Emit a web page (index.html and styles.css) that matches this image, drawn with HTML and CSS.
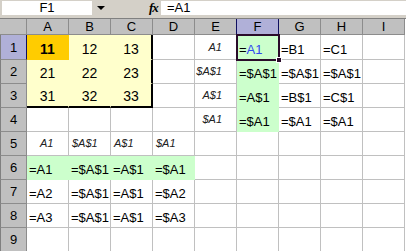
FILE: index.html
```html
<!DOCTYPE html>
<html lang="en">
<head>
    <title>Sheet1</title>
    <meta name="viewport" content="width=device-width, initial-scale=1.0" />
    <link rel="stylesheet" href="styles.css">
</head>

<body>
    <div class="formula-bar">
        <div class="name-box">F1</div>
        <div class="name-drop"></div>
        <div class="fx">fx</div>
        <div class="formula-input">=A1</div>
    </div>

    <div class="sheet">
        <!-- column headers -->
        <div class="c h corner"></div>
        <div class="c h">A</div>
        <div class="c h">B</div>
        <div class="c h">C</div>
        <div class="c h">D</div>
        <div class="c h before-on">E</div>
        <div class="c h on col-on">F</div>
        <div class="c h">G</div>
        <div class="c h">H</div>
        <div class="c h">I</div>

        <!-- row 1 -->
        <div class="c h rh on row-on">1</div>
        <div class="c num gold">11</div>
        <div class="c num yel">12</div>
        <div class="c num yel box-r">13</div>
        <div class="c"></div>
        <div class="c lbl lbl-e">A1</div>
        <div class="c grn sel">=<span class="ref">A1</span></div>
        <div class="c">=B1</div>
        <div class="c">=C1</div>
        <div class="c"></div>

        <!-- row 2 -->
        <div class="c h rh">2</div>
        <div class="c num yel">21</div>
        <div class="c num yel">22</div>
        <div class="c num yel box-r">23</div>
        <div class="c"></div>
        <div class="c lbl lbl-e">$A$1</div>
        <div class="c grn">=$A$1</div>
        <div class="c">=$A$1</div>
        <div class="c">=$A$1</div>
        <div class="c"></div>

        <!-- row 3 -->
        <div class="c h rh">3</div>
        <div class="c num yel box-b">31</div>
        <div class="c num yel box-b">32</div>
        <div class="c num yel box-r box-b">33</div>
        <div class="c"></div>
        <div class="c lbl lbl-e">A$1</div>
        <div class="c grn">=A$1</div>
        <div class="c">=B$1</div>
        <div class="c">=C$1</div>
        <div class="c"></div>

        <!-- row 4 -->
        <div class="c h rh">4</div>
        <div class="c"></div>
        <div class="c"></div>
        <div class="c"></div>
        <div class="c"></div>
        <div class="c lbl lbl-e">$A1</div>
        <div class="c grn">=$A1</div>
        <div class="c">=$A1</div>
        <div class="c">=$A1</div>
        <div class="c"></div>

        <!-- row 5 -->
        <div class="c h rh">5</div>
        <div class="c lbl lbl-a">A1</div>
        <div class="c lbl">$A$1</div>
        <div class="c lbl">A$1</div>
        <div class="c lbl">$A1</div>
        <div class="c"></div>
        <div class="c"></div>
        <div class="c"></div>
        <div class="c"></div>
        <div class="c"></div>

        <!-- row 6 -->
        <div class="c h rh">6</div>
        <div class="c grn">=A1</div>
        <div class="c grn">=$A$1</div>
        <div class="c grn">=A$1</div>
        <div class="c grn">=$A1</div>
        <div class="c"></div>
        <div class="c"></div>
        <div class="c"></div>
        <div class="c"></div>
        <div class="c"></div>

        <!-- row 7 -->
        <div class="c h rh">7</div>
        <div class="c">=A2</div>
        <div class="c">=$A$1</div>
        <div class="c">=A$1</div>
        <div class="c">=$A2</div>
        <div class="c"></div>
        <div class="c"></div>
        <div class="c"></div>
        <div class="c"></div>
        <div class="c"></div>

        <!-- row 8 -->
        <div class="c h rh">8</div>
        <div class="c">=A3</div>
        <div class="c">=$A$1</div>
        <div class="c">=A$1</div>
        <div class="c">=$A3</div>
        <div class="c"></div>
        <div class="c"></div>
        <div class="c"></div>
        <div class="c"></div>
        <div class="c"></div>

        <!-- row 9 -->
        <div class="c h rh">9</div>
        <div class="c"></div>
        <div class="c"></div>
        <div class="c"></div>
        <div class="c"></div>
        <div class="c"></div>
        <div class="c"></div>
        <div class="c"></div>
        <div class="c"></div>
        <div class="c"></div>
    </div>
</body>

</html>
```

FILE: styles.css
```css
body {
    margin: 0;
    background: white;
    color: black;
    font-family: "Liberation Sans", Arial, sans-serif;
    font-size: 13px;
    overflow: hidden;
}

/* formula bar */
.formula-bar {
    display: flex;
    align-items: flex-start;
    height: 18px;
    padding-top: 1px;
    box-sizing: border-box;
    background: #d4d0c8;
}

.name-box {
    margin-left: 2px;
    width: 90px;
    height: 14px;
    line-height: 14px;
    background: white;
    text-align: center;
}

.name-drop {
    width: 17px;
    height: 14px;
    display: flex;
    align-items: center;
    justify-content: center;
}

.name-drop::before {
    content: "";
    border-left: 4px solid transparent;
    border-right: 4px solid transparent;
    border-top: 4px solid black;
}

.fx {
    margin-left: 40px;
    width: 12px;
    height: 14px;
    line-height: 14px;
    font-family: "Liberation Serif", serif;
    font-style: italic;
    font-weight: bold;
    font-size: 13px;
    letter-spacing: -1px;
}

.formula-input {
    flex: 1;
    height: 14px;
    line-height: 14px;
    padding-left: 6px;
    background: white;
}

/* grid */
.sheet {
    display: grid;
    grid-template-columns: 27px repeat(9, 42px);
    grid-template-rows: 16px 25px repeat(8, 24px);
    border-top: 1px solid #808080;
}

.c {
    box-sizing: border-box;
    display: flex;
    align-items: flex-end;
    padding: 0 0 2px 2px;
    border-right: 1px solid #c0c0c0;
    border-bottom: 1px solid #c0c0c0;
    white-space: nowrap;
    overflow: hidden;
}

.h {
    align-items: center;
    justify-content: center;
    padding: 0;
    background: #c0c0c0;
    border-color: #8c8c8c;
}

.rh {
    border-left: 1px solid #808080;
}

.h.on {
    background: #b0b0d8;
}

.before-on {
    border-right-color: #101060;
}

.col-on {
    border-right-color: #101060;
    border-bottom-color: #101060;
}

.row-on {
    border-right-color: #101060;
}

.num {
    justify-content: center;
    padding-left: 0;
    font-size: 14px;
}

.gold {
    background: #ffcc00;
    border-color: #ffcc00;
    font-weight: bold;
}

.yel {
    background: #ffffcc;
    border-color: #ffffcc;
}

.box-r {
    border-right: 2px solid black;
}

.box-b {
    border-bottom: 2px solid black;
}

.grn {
    background: #ccffcc;
    border-color: #ccffcc;
}

.lbl {
    align-items: center;
    padding: 0 0 1px 3px;
    font-size: 11px;
    font-style: italic;
    color: #222;
}

.lbl-a {
    padding-left: 13px;
}

.lbl-e {
    justify-content: flex-end;
    padding-right: 14px;
}

/* active cell */
.sel {
    position: relative;
    overflow: visible;
    z-index: 1;
}

.sel::after {
    content: "";
    position: absolute;
    left: -1px;
    top: -1px;
    right: -2px;
    bottom: -2px;
    border: 2px solid #2a0c2a;
}

.sel::before {
    content: "";
    position: absolute;
    right: -4px;
    bottom: -4px;
    width: 4px;
    height: 4px;
    background: #2a0c2a;
    border: 1px solid white;
    z-index: 1;
}

.ref {
    color: #3048f0;
}
```
